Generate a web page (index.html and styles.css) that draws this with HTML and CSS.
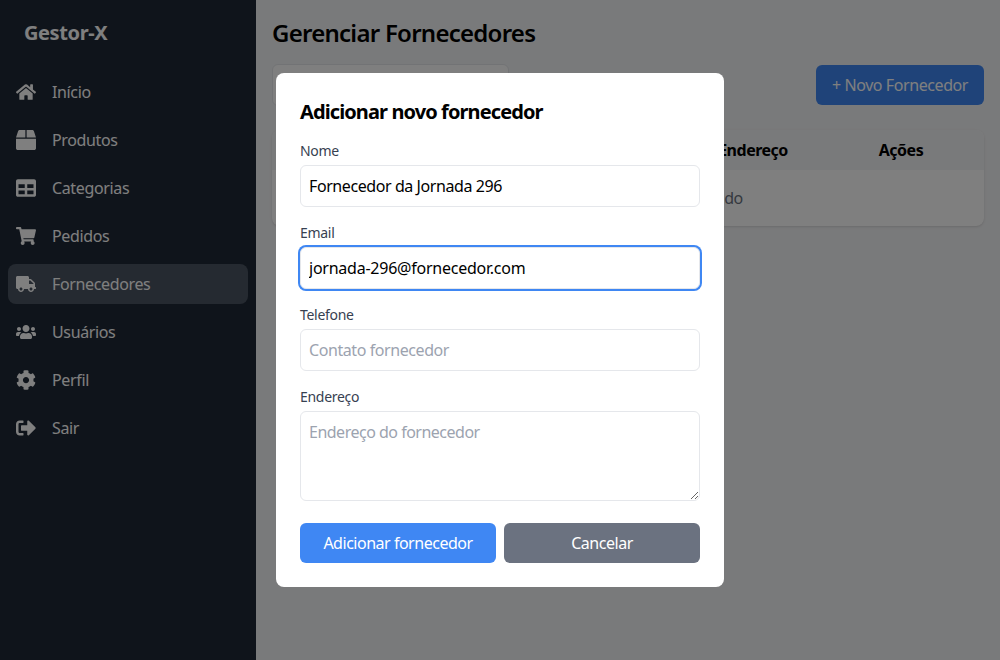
FILE: index.html
```html
<!DOCTYPE html>
<html lang="pt-BR">
<head>
<meta charset="utf-8">
<title>Gestor-X</title>
<link rel="stylesheet" href="styles.css">
</head>
<body>
<div class="app">
  <aside class="sidebar">
    <div class="brand">Gestor-X</div>
    <nav class="nav">
      <a class="nav-item"><svg viewBox="0 0 576 512"><path d="M280.37 148.26L96 300.11V464a16 16 0 0 0 16 16l112.06-.29a16 16 0 0 0 15.92-16V368a16 16 0 0 1 16-16h64a16 16 0 0 1 16 16v95.64a16 16 0 0 0 16 16.05L464 480a16 16 0 0 0 16-16V300L295.67 148.26a12.19 12.19 0 0 0-15.3 0zM571.6 251.47L488 182.56V44.05a12 12 0 0 0-12-12h-56a12 12 0 0 0-12 12v72.61L318.47 43a48 48 0 0 0-61 0L4.34 251.47a12 12 0 0 0-1.6 16.9l25.5 31A12 12 0 0 0 45.15 301l235.22-193.74a12.19 12.19 0 0 1 15.3 0L530.9 301a12 12 0 0 0 16.9-1.6l25.5-31a12 12 0 0 0-1.7-16.93z"/></svg>Início</a>
      <a class="nav-item"><svg viewBox="0 0 512 512"><path d="M509.5 184.6L458.9 32.8C452.4 13.2 434.1 0 413.4 0H272v192h238.7c-.4-2.5-.4-5-1.2-7.4zM240 0H98.6c-20.7 0-39 13.2-45.5 32.8L2.5 184.6c-.8 2.4-.8 4.9-1.2 7.4H240V0zM0 224v240c0 26.5 21.5 48 48 48h416c26.5 0 48-21.5 48-48V224H0z"/></svg>Produtos</a>
      <a class="nav-item"><svg viewBox="0 0 512 512"><path d="M464 32H48C21.49 32 0 53.49 0 80v352c0 26.51 21.49 48 48 48h416c26.51 0 48-21.49 48-48V80c0-26.51-21.49-48-48-48zM224 416H64v-96h160v96zm0-160H64v-96h160v96zm224 160H288v-96h160v96zm0-160H288v-96h160v96z"/></svg>Categorias</a>
      <a class="nav-item"><svg viewBox="0 0 576 512"><path d="M528.12 301.319l47.273-208C578.806 78.301 567.391 64 551.99 64H159.208l-9.166-44.81C147.758 8.021 137.93 0 126.529 0H24C10.745 0 0 10.745 0 24v16c0 13.255 10.745 24 24 24h69.883l70.248 343.435C147.325 417.1 136 435.222 136 456c0 30.928 25.072 56 56 56s56-25.072 56-56c0-15.674-6.447-29.835-16.824-40h209.647C430.447 426.165 424 440.326 424 456c0 30.928 25.072 56 56 56s56-25.072 56-56c0-22.172-12.888-41.332-31.579-50.405l5.517-24.276c3.413-15.018-8.002-29.319-23.403-29.319H218.117l-6.545-32h293.145c11.206 0 20.92-7.754 23.403-18.681z"/></svg>Pedidos</a>
      <a class="nav-item active"><svg viewBox="0 0 640 512"><path d="M624 352h-16V243.9c0-12.7-5.1-24.9-14.1-33.9L494 110.1c-9-9-21.2-14.1-33.9-14.1H416V48c0-26.5-21.5-48-48-48H48C21.5 0 0 21.5 0 48v320c0 26.5 21.5 48 48 48h16c0 53 43 96 96 96s96-43 96-96h128c0 53 43 96 96 96s96-43 96-96h48c8.8 0 16-7.2 16-16v-32c0-8.8-7.2-16-16-16zM160 464c-26.5 0-48-21.5-48-48s21.5-48 48-48 48 21.5 48 48-21.5 48-48 48zm320 0c-26.5 0-48-21.5-48-48s21.5-48 48-48 48 21.5 48 48-21.5 48-48 48zm80-208H416V144h44.1l99.9 99.9V256z"/></svg>Fornecedores</a>
      <a class="nav-item"><svg viewBox="0 0 640 512"><path d="M96 224c35.3 0 64-28.7 64-64s-28.7-64-64-64-64 28.7-64 64 28.7 64 64 64zm448 0c35.3 0 64-28.7 64-64s-28.7-64-64-64-64 28.7-64 64 28.7 64 64 64zm32 32h-64c-17.6 0-33.5 7.1-45.1 18.6 40.3 22.1 68.9 62 75.1 109.4h66c17.7 0 32-14.3 32-32v-32c0-35.3-28.7-64-64-64zm-256 0c61.9 0 112-50.1 112-112S381.9 32 320 32 208 82.1 208 144s50.1 112 112 112zm76.8 32h-8.3c-20.8 10-43.9 16-68.5 16s-47.6-6-68.5-16h-8.3C179.6 288 128 339.6 128 403.2V432c0 26.5 21.5 48 48 48h288c26.5 0 48-21.5 48-48v-28.8c0-63.6-51.6-115.2-115.2-115.2zm-223.7-13.4C161.5 263.1 145.6 256 128 256H64c-35.3 0-64 28.7-64 64v32c0 17.7 14.3 32 32 32h65.9c6.3-47.4 34.9-87.3 75.2-109.4z"/></svg>Usuários</a>
      <a class="nav-item"><svg viewBox="0 0 512 512"><path d="M487.4 315.7l-42.6-24.6c4.3-23.2 4.3-47 0-70.2l42.6-24.6c4.9-2.8 7.1-8.6 5.5-14-11.1-35.6-30-67.8-54.7-94.6-3.8-4.1-10-5.1-14.8-2.3L380.8 110c-17.9-15.4-38.5-27.3-60.8-35.1V25.8c0-5.6-3.9-10.5-9.4-11.7-36.7-8.2-74.3-7.8-109.2 0-5.5 1.2-9.4 6.1-9.4 11.7V75c-22.2 7.9-42.8 19.8-60.8 35.1L88.7 85.5c-4.9-2.8-11-1.9-14.8 2.3-24.7 26.7-43.6 58.9-54.7 94.6-1.7 5.4.6 11.2 5.5 14L67.3 221c-4.3 23.2-4.3 47 0 70.2l-42.6 24.6c-4.9 2.8-7.1 8.6-5.5 14 11.1 35.6 30 67.8 54.7 94.6 3.8 4.1 10 5.1 14.8 2.3l42.6-24.6c17.9 15.4 38.5 27.3 60.8 35.1v49.2c0 5.6 3.9 10.5 9.4 11.7 36.7 8.2 74.3 7.8 109.2 0 5.5-1.2 9.4-6.1 9.4-11.7v-49.2c22.2-7.9 42.8-19.8 60.8-35.1l42.6 24.6c4.9 2.8 11 1.9 14.8-2.3 24.7-26.7 43.6-58.9 54.7-94.6 1.5-5.5-.7-11.3-5.6-14.1zM256 336c-44.1 0-80-35.9-80-80s35.9-80 80-80 80 35.9 80 80-35.9 80-80 80z"/></svg>Perfil</a>
      <a class="nav-item"><svg viewBox="0 0 512 512"><path d="M497 273L329 441c-15 15-41 4.5-41-17v-96H152c-13.3 0-24-10.7-24-24v-96c0-13.3 10.7-24 24-24h136V88c0-21.4 25.9-32 41-17l168 168c9.3 9.4 9.3 24.6 0 34zM192 436v-40c0-6.6-5.4-12-12-12H96c-17.7 0-32-14.3-32-32V160c0-17.7 14.3-32 32-32h84c6.6 0 12-5.4 12-12V76c0-6.6-5.4-12-12-12H96c-53 0-96 43-96 96v192c0 53 43 96 96 96h84c6.6 0 12-5.4 12-12z"/></svg>Sair</a>
    </nav>
  </aside>
  <main class="main">
    <h1 class="page-title">Gerenciar Fornecedores</h1>
    <div class="toolbar">
      <input class="input search" type="text">
      <button class="btn btn-primary">+ Novo Fornecedor</button>
    </div>
    <div class="table">
      <div class="table-head"><span>Nome</span><span>Email</span><span>Telefone</span><span>Endereço</span><span>Ações</span></div>
      <div class="table-empty">Nenhum fornecedor encontrado</div>
    </div>
  </main>
</div>
<div class="overlay">
  <form class="modal">
    <h2 class="modal-title">Adicionar novo fornecedor</h2>
    <div class="field"><label class="label">Nome</label><input class="input" type="text" value="Fornecedor da Jornada 296"></div>
    <div class="field"><label class="label">Email</label><input class="input focused" type="text" value="jornada-296@fornecedor.com"></div>
    <div class="field"><label class="label">Telefone</label><input class="input" type="text" placeholder="Contato fornecedor"></div>
    <div class="field field-area"><label class="label">Endereço</label><textarea class="input" rows="3" placeholder="Endereço do fornecedor"></textarea></div>
    <div class="actions">
      <button type="button" class="btn btn-primary">Adicionar fornecedor</button>
      <button type="button" class="btn btn-muted">Cancelar</button>
    </div>
  </form>
</div>
</body>
</html>
```

FILE: styles.css
```css
*, *::before, *::after { box-sizing: border-box; }
body {
  margin: 0;
  font-family: "Noto Sans", system-ui, sans-serif;
  font-size: 16px;
  line-height: 24px;
  letter-spacing: -0.42px;
  color: #000;
  overflow: hidden;
}
h1, h2 { margin: 0; }
button, input, textarea { font: inherit; letter-spacing: inherit; color: inherit; margin: 0; }

.app { display: flex; height: 100vh; background: #f3f4f6; }
.sidebar { width: 256px; flex: none; background: #1f2937; color: #fff; }
.brand {
  display: flex;
  align-items: center;
  height: 64px;
  padding: 2px 24px 0;
  font-size: 20px;
  line-height: 28px;
  font-weight: 700;
  letter-spacing: -0.4px;
}
.nav { display: flex; flex-direction: column; gap: 8px; padding: 8px; letter-spacing: -0.36px; }
.nav-item {
  display: flex;
  align-items: center;
  gap: 16px;
  height: 40px;
  padding: 0 8px;
  border-radius: 8px;
}
.nav-item svg { width: 20px; height: 20px; fill: currentColor; }
.nav-item.active { background: #4b5563; }

.main { flex: 1; padding: 16px; }
.page-title {
  padding-top: 1px;
  margin-bottom: 15px;
  font-size: 24px;
  line-height: 32px;
  font-weight: 600;
  letter-spacing: -0.74px;
}
.toolbar { display: flex; align-items: center; justify-content: space-between; margin-bottom: 24px; }
.table { overflow: hidden; border-radius: 8px; background: #fff; box-shadow: 0 1px 3px rgba(0,0,0,.1), 0 1px 2px -1px rgba(0,0,0,.1); }
.table-head {
  display: grid;
  grid-template-columns: 180px 120px 116px 130px 166px;
  padding: 8px 0;
  background: #f3f4f6;
  font-weight: 700;
  letter-spacing: -0.5px;
  text-align: center;
}
.table-empty { padding: 16px; text-align: center; letter-spacing: -0.54px; color: #6b7280; }

.overlay {
  position: fixed;
  inset: 0;
  display: flex;
  align-items: center;
  justify-content: center;
  background: rgba(0,0,0,.5);
}
.modal { width: 448px; padding: 24px; border-radius: 8px; background: #fff; }
.modal-title {
  padding-top: 1px;
  margin-bottom: 15px;
  font-size: 20px;
  line-height: 28px;
  font-weight: 700;
  letter-spacing: -0.9px;
}
.field { margin-bottom: 16px; }
.field-area { margin-bottom: 22px; }
.label {
  display: block;
  margin-bottom: 4px;
  font-size: 14px;
  line-height: 20px;
  letter-spacing: -0.3px;
  color: #374151;
}
.input {
  display: block;
  width: 100%;
  padding: 8px;
  border: 1px solid #e5e7eb;
  border-radius: 6px;
  background: #fff;
  outline: none;
}
input.input { height: 42px; }
textarea.input { letter-spacing: -0.5px; }
.input.search { width: 237px; }
.input::placeholder { color: #9ca3af; opacity: 1; }
.input.focused { letter-spacing: -0.24px; box-shadow: 0 0 0 2px #3f87f3; }
.actions { display: grid; grid-template-columns: 1fr 1fr; gap: 8px; }
.btn { height: 40px; padding: 0 16px; border: 0; border-radius: 6px; color: #fff; }
.actions .btn { letter-spacing: -0.48px; }
.btn-primary { background: #3f87f3; }
.btn-muted { background: #6b7280; }
```
